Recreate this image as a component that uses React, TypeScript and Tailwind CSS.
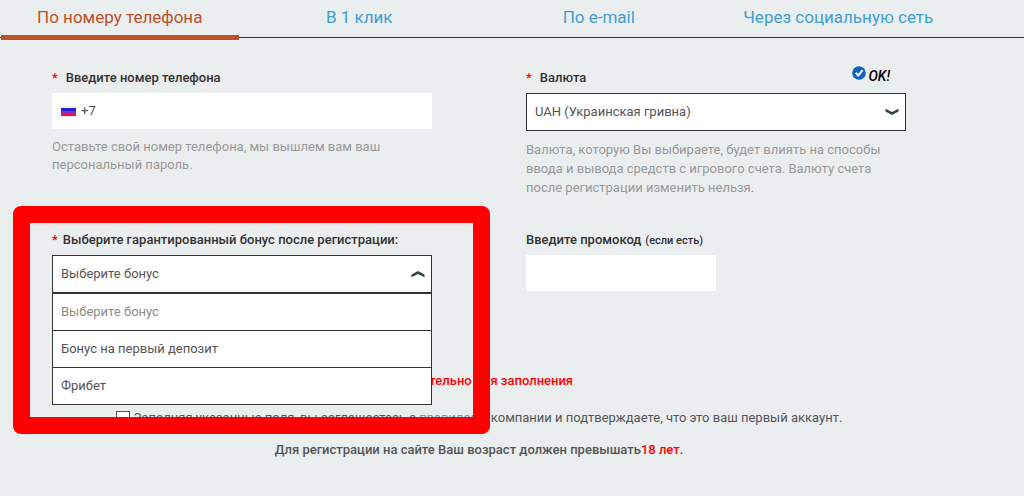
import React, { useState } from "react";
import clsx from "clsx";

const TABS = ["По номеру телефона", "В 1 клик", "По e-mail", "Через социальную сеть"];

const BONUSES = ["Выберите бонус", "Бонус на первый депозит", "Фрибет"];

function Chevron({ up = false }: { up?: boolean }) {
  return (
    <svg
      viewBox="0 0 14 8"
      className={clsx(
        "pointer-events-none absolute right-[7px] top-[15px] h-2 w-3.5",
        up && "rotate-180"
      )}
      aria-hidden="true"
    >
      <path d="M0.5 0.8 L7 4 L13.5 0.8 V3.6 L7 7 L0.5 3.6 Z" fill="#2f4549" />
    </svg>
  );
}

function FlagRu() {
  return (
    <svg viewBox="0 0 15 11" className="h-[11px] w-[15px] shrink-0" aria-hidden="true">
      <rect width="15" height="11" fill="#f1f1f8" />
      <rect y="2" width="15" height="5" fill="#2320d8" />
      <rect y="5" width="15" height="2" fill="#7a2fd8" />
      <rect y="7" width="15" height="3" fill="#f8102c" />
    </svg>
  );
}

function Star() {
  return <span className="text-[#ff0000]">*</span>;
}

function Tabs() {
  const [active, setActive] = useState(0);

  return (
    <nav className="grid h-[38px] grid-cols-4 border-b border-[#333] pr-[66px]">
      {TABS.map((tab, i) => (
        <button
          key={tab}
          type="button"
          onClick={() => setActive(i)}
          className={clsx(
            "mx-px h-10 border-b-5 pb-0.5 text-[17px] leading-8 whitespace-nowrap",
            active === i
              ? "border-[#bf5127] text-[#bf5127]"
              : "border-transparent text-[#3f9fd3]"
          )}
        >
          {tab}
        </button>
      ))}
    </nav>
  );
}

function BonusField() {
  const [bonus, setBonus] = useState(BONUSES[0]);

  return (
    <div className="relative">
      <label htmlFor="bonus" className="mb-[5px] flex gap-[5px] font-medium text-[#333] whitespace-nowrap">
        <Star />
        Выберите гарантированный бонус после регистрации:
      </label>
      <div className="relative">
        <select
          id="bonus"
          value={bonus}
          onChange={(e) => setBonus(e.target.value)}
          className="block h-[38px] w-full appearance-none border border-[#333] bg-white px-2 text-[#555]"
        >
          {BONUSES.map((b) => (
            <option key={b}>{b}</option>
          ))}
        </select>
        <Chevron up />

        {/* Open list, lies over the notes below */}
        <ul className="absolute inset-x-0 top-full z-10 border border-b-0 border-[#333] bg-white">
          {BONUSES.map((b, i) => (
            <li key={b}>
              <button
                type="button"
                onClick={() => setBonus(b)}
                className={clsx(
                  "block h-[37px] w-full border-b border-[#333] px-2 text-left",
                  i === 0 ? "text-[#8c8c8c]" : "text-[#555]"
                )}
              >
                {b}
              </button>
            </li>
          ))}
        </ul>
      </div>

      {/* Highlight frame */}
      <div className="pointer-events-none absolute -top-6 -right-[58px] -left-[39px] z-20 h-[228px] rounded-lg border-[17px] border-[#ff0000]" />
    </div>
  );
}

export default function App() {
  const [phone, setPhone] = useState("+7");
  const [promo, setPromo] = useState("");
  const [agreed, setAgreed] = useState(false);

  return (
    <div className="min-h-screen bg-[#ebeeef] font-[Roboto,'Liberation_Sans',sans-serif] text-[13px] leading-5 text-[#555]">
      <Tabs />

      <form>
        <div className="grid grid-cols-2 gap-x-[94px] gap-y-[33px] pt-[30px] pr-[118px] pl-[52px]">
          <div>
            <label htmlFor="phone" className="mb-[5px] flex gap-2 font-medium text-[#333]">
              <Star />
              Введите номер телефона
            </label>
            <div className="flex h-9 items-center gap-[5px] bg-white px-[9px]">
              <FlagRu />
              <input
                id="phone"
                type="tel"
                value={phone}
                onChange={(e) => setPhone(e.target.value)}
                className="min-w-0 flex-1 outline-none"
              />
            </div>
            <p className="mt-[9px] leading-[18px] text-[#999]">
              Оставьте свой номер телефона, мы вышлем вам ваш персональный пароль.
            </p>
          </div>

          <div>
            <div className="mb-[5px] flex h-5 justify-between pr-4">
              <label htmlFor="currency" className="flex gap-2 font-medium text-[#333]">
                <Star />
                Валюта
              </label>
              <span className="flex items-start gap-0.5 text-sm leading-4 font-medium text-black italic">
                <svg viewBox="0 0 14 14" className="-mt-0.5 h-3.5 w-3.5" aria-hidden="true">
                  <circle cx="7" cy="7" r="6.8" fill="#0b62c4" />
                  <path d="M3.6 6.8 L6.2 9.6 L10.6 4.2" fill="none" stroke="#fff" strokeWidth="2" />
                </svg>
                OK!
              </span>
            </div>
            <div className="relative">
              <select
                id="currency"
                className="block h-[38px] w-full appearance-none border border-[#333] bg-white px-2 text-[#555]"
              >
                <option>UAH (Украинская гривна)</option>
              </select>
              <Chevron />
            </div>
            <p className="mt-[9px] leading-[19px] text-[#999]">
              Валюта, которую Вы выбираете, будет влиять на способы ввода и вывода средств с игрового
              счета. Валюту счета после регистрации изменить нельзя.
            </p>
          </div>

          <BonusField />

          <div>
            <label htmlFor="promo" className="mb-[5px] flex items-baseline gap-1 font-medium text-[#333]">
              Введите промокод <span className="text-[11px] leading-4">(если есть)</span>
            </label>
            <input
              id="promo"
              type="text"
              value={promo}
              onChange={(e) => setPromo(e.target.value)}
              className="block h-9 w-1/2 bg-white px-2 outline-none"
            />
          </div>
        </div>

        <div className="flex flex-col items-center pt-[78px] pr-[66px]">
          <p className="font-medium text-[#ff0000]">* обязательно для заполнения</p>
          <div className="mt-[17px] flex items-center gap-1 whitespace-nowrap">
            <input
              id="agree"
              type="checkbox"
              checked={agreed}
              onChange={(e) => setAgreed(e.target.checked)}
              className="h-3.5 w-3.5 appearance-none border border-[#555] bg-white checked:bg-[#0b62c4]"
            />
            <label htmlFor="agree">
              Заполняя указанные поля, вы соглашаетесь с{" "}
              <a href="#rules" className="text-[#5b9abf]">
                правилами
              </a>{" "}
              компании и подтверждаете, что это ваш первый аккаунт.
            </label>
          </div>
          <p className="mt-3 font-medium">
            Для регистрации на сайте Ваш возраст должен превышать
            <span className="text-[#ff0000]">18 лет.</span>
          </p>
        </div>
      </form>
    </div>
  );
}
